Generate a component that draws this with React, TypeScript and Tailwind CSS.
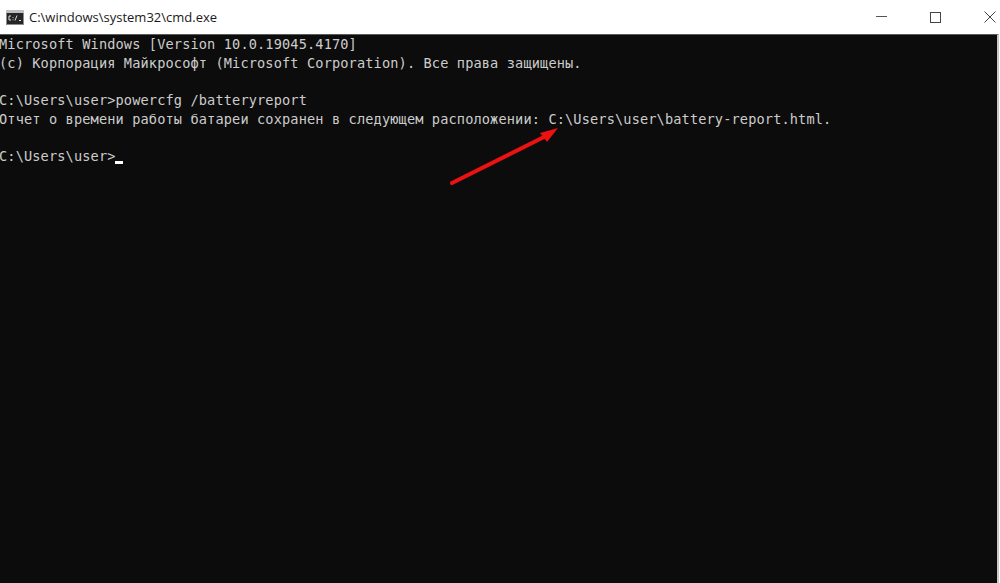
import React from 'react';

const lines = [
  'Microsoft Windows [Version 10.0.19045.4170]',
  '(c) Корпорация Майкрософт (Microsoft Corporation). Все права защищены.',
  '',
  'C:\\Users\\user>powercfg /batteryreport',
  'Отчет о времени работы батареи сохранен в следующем расположении: C:\\Users\\user\\battery-report.html.',
  '',
];

const App: React.FC = () => {
  return (
    <div className="relative w-[1000px] h-[583px] overflow-hidden bg-white flex flex-col">
      {/* title bar */}
      <div className="h-[34px] flex items-center shrink-0 bg-white">
        <svg width="18" height="15" viewBox="0 0 18 15" className="ml-[6px] mr-[5px]">
          <rect x="0" y="0" width="18" height="15" fill="#8c8c8c" />
          <rect x="0" y="0" width="18" height="3" fill="#c0c0c0" />
          <rect x="1" y="3" width="16" height="11" fill="#262626" />
          <path d="M5 6H3V10H5M7 7v.8M7 9.4v.8M9 10.5L11 5.5M13 10.5h2" stroke="#dddddd" strokeWidth="1" fill="none" />
        </svg>
        <span className="text-[13px] text-[#1a1a1a] font-['Open_Sans','Liberation_Sans',sans-serif] leading-none">
          C:\windows\system32\cmd.exe
        </span>
        <div className="ml-auto pr-[4px] flex items-center gap-[43px]">
          <div className="w-[11px] h-[1px] bg-[#555555] mt-[-2px]" />
          <div className="w-[11px] h-[11px] border border-[#444444]" />
          <svg width="12" height="12" viewBox="0 0 12 12">
            <path d="M0.5 0.5L11.5 11.5M11.5 0.5L0.5 11.5" stroke="#444444" strokeWidth="1" />
          </svg>
        </div>
      </div>

      {/* console area */}
      <div className="flex-1 flex flex-col bg-[#0c0c0c] border-t-[1px] border-t-[#5a5a5a] border-r-[2px] border-r-[#c8c8c8] mr-[1px]">
        <div className="ml-[-1px] font-['DejaVu_Sans_Mono',monospace] text-[13.6px] tracking-[0.14px] leading-[18.7px] text-[#cccccc] whitespace-pre">
          {lines.map((line, i) => (
            <div key={i} className="h-[18.7px]">{line}</div>
          ))}
          <div className="h-[18.7px] flex">
            <span>C:\Users\user&gt;</span>
            <span className="w-[8px] h-[3px] bg-white mt-[14px] ml-[-1px]" />
          </div>
        </div>
      </div>

      {/* red arrow annotation */}
      <svg className="absolute left-[440px] top-[120px]" width="130" height="75" viewBox="0 0 130 75">
        <path d="M12 63L104 17" stroke="#ee1111" strokeWidth="4" strokeLinecap="round" fill="none" />
        <path d="M118 8L100 13L107 22Z" fill="#ee1111" />
      </svg>
    </div>
  );
};

export default App;
